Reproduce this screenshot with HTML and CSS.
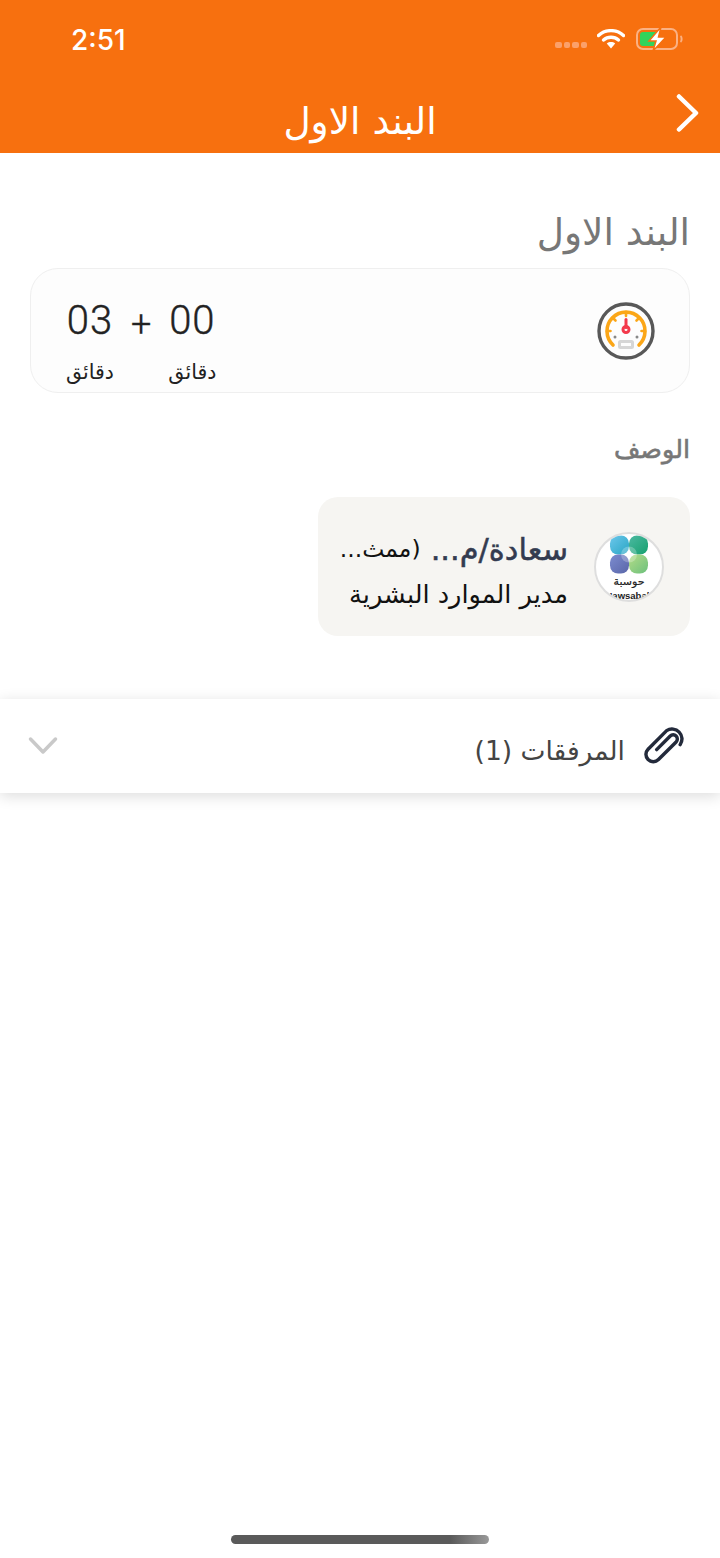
FILE: index.html
```html
<!DOCTYPE html>
<html lang="ar" dir="rtl">
  <head>
    <meta charset="UTF-8" />
    <meta name="viewport" content="width=device-width, initial-scale=1.0" />
    <title>البند الاول</title>
    <link rel="stylesheet" href="styles.css">
  </head>

  <body>
    <div id="whole">
      <header class="topbar">
        <div class="status" dir="ltr">
          <span class="time">2:51</span>
          <div class="status-icons">
            <div class="signal"><i></i><i></i><i></i><i></i></div>
            <svg class="wifi" width="28" height="20" viewBox="0 0 28 20">
              <path d="M1.500 6.500C8.500 0 19.500 0 26.500 6.500" fill="none" stroke="#fff" stroke-width="3.400" stroke-linecap="round" />
              <path d="M6.500 11C10.800 7.300 17.200 7.300 21.500 11" fill="none" stroke="#fff" stroke-width="3.400" stroke-linecap="round" />
              <path d="M9.800 14.500C12.200 12.600 15.800 12.600 18.200 14.500L14 19.500Z" fill="#fff" />
            </svg>
            <svg class="battery" width="48" height="24" viewBox="0 0 48 24">
              <rect x="2" y="2" width="40" height="20" rx="6" fill="none" stroke="#fbb183" stroke-width="2" />
              <path d="M5 8a3 3 0 0 1 3-3h13v14H8a3 3 0 0 1-3-3z" fill="#32d35a" />
              <path d="M45.500 9C47 10 47 14 45.500 15" fill="none" stroke="#fbb183" stroke-width="2" />
              <path d="M26 0L14 14h7L18 24 31 10h-7.500z" fill="#fff" stroke="#f7700f" stroke-width="1.500" />
            </svg>
          </div>
        </div>
        <div class="nav">
          <svg class="back" width="24" height="38" viewBox="0 0 24 38">
            <path d="M3 2.500L20 19 3 35.500" fill="none" stroke="#fff" stroke-width="4.500" stroke-linecap="round" stroke-linejoin="round" />
          </svg>
          <h1>البند الاول</h1>
        </div>
      </header>

      <main class="content">
        <h2 class="item-title">البند الاول</h2>

        <div class="time-card">
          <svg class="gauge" width="60" height="60" viewBox="0 0 60 60">
            <circle cx="30" cy="30" r="27" fill="none" stroke="#585858" stroke-width="3.400" />
            <path d="M17 44A19 19 0 1 1 43 44" fill="none" stroke="#fba617" stroke-width="3.600" stroke-linecap="round" />
            <path d="M30 11v4M17 17l2.500 2.500M43 17l-2.500 2.500M11 30h3.500M49 30h-3.500" stroke="#fba617" stroke-width="2.600" stroke-linecap="round" />
            <path d="M30 18.500v8" stroke="#f33a4c" stroke-width="3" stroke-linecap="round" />
            <circle cx="30" cy="28.500" r="3" fill="none" stroke="#f33a4c" stroke-width="3" />
            <circle cx="19" cy="36" r="1.500" fill="#888" />
            <circle cx="41" cy="36" r="1.500" fill="#888" />
            <rect x="23.500" y="40.500" width="13" height="6" rx="1" fill="none" stroke="#d6d6d6" stroke-width="3" />
          </svg>
          <div class="durations" dir="ltr">
            <div class="duration">
              <span class="num">03</span>
              <span class="unit">دقائق</span>
            </div>
            <span class="plus">+</span>
            <div class="duration">
              <span class="num">00</span>
              <span class="unit">دقائق</span>
            </div>
          </div>
        </div>

        <h3 class="desc-label">الوصف</h3>

        <div class="person-card">
          <div class="avatar">
            <svg width="66" height="66" viewBox="1 1 66 66">
              <defs>
                <linearGradient id="tile-a" x1="0" y1="0" x2="1" y2="1">
                  <stop offset="0" stop-color="#6cc7ec" />
                  <stop offset="1" stop-color="#2aa6c4" />
                </linearGradient>
                <linearGradient id="tile-b" x1="0" y1="0" x2="1" y2="1">
                  <stop offset="0" stop-color="#4cb9a2" />
                  <stop offset="1" stop-color="#16a06e" />
                </linearGradient>
                <linearGradient id="tile-c" x1="0" y1="0" x2="1" y2="1">
                  <stop offset="0" stop-color="#7c8cd0" />
                  <stop offset="1" stop-color="#5a66a8" />
                </linearGradient>
                <linearGradient id="tile-d" x1="0" y1="0" x2="1" y2="1">
                  <stop offset="0" stop-color="#b4dc88" />
                  <stop offset="1" stop-color="#6cc07c" />
                </linearGradient>
              </defs>
              <rect x="15" y="2.500" width="19" height="19" rx="8" fill="url(#tile-a)" />
              <rect x="34" y="2.500" width="19" height="19" rx="8" fill="url(#tile-b)" />
              <rect x="15" y="21.500" width="19" height="19" rx="8" fill="url(#tile-c)" />
              <rect x="34" y="21.500" width="19" height="19" rx="8" fill="url(#tile-d)" />
              <circle cx="34" cy="21.500" r="8" fill="#fff" fill-opacity="0.250" />
              <text class="logo-ar" x="34" y="52" text-anchor="middle">حوسبة</text>
              <text class="logo-en" x="34" y="66" text-anchor="middle">Hawsabah</text>
            </svg>
          </div>
          <div class="person-text">
            <div class="person-name"><b>سعادة/م...</b><span>(ممث...</span></div>
            <div class="person-role">مدير الموارد البشرية</div>
          </div>
        </div>
      </main>

      <section class="attachments">
        <svg class="clip" width="42" height="38" viewBox="0 0 46 42">
          <path d="M16 25L31 10a4.500 4.500 0 0 1 6.500 6.500L18 36a8 8 0 0 1-11.500-11.500L27 4a11 11 0 0 1 15 15.500" fill="none" stroke="#232a3b" stroke-width="3.800" stroke-linecap="round" stroke-linejoin="round" />
        </svg>
        <span class="attach-label">المرفقات (1)</span>
        <svg class="chevron" width="32" height="20" viewBox="0 0 32 20">
          <path d="M2.500 3L15 16 27.500 3" fill="none" stroke="#c9c9c9" stroke-width="3.500" stroke-linecap="round" stroke-linejoin="round" />
        </svg>
      </section>

      <div class="home-bar"></div>
    </div>
  </body>
</html>
```

FILE: styles.css
```css
* {
  box-sizing: border-box;
}

body {
  margin: 0;
  background-color: #fff;
  font-family: "DejaVu Sans", sans-serif;
}

#whole {
  display: flex;
  flex-direction: column;
  height: 1558px;
  overflow: hidden;
}

.topbar {
  background-color: #f7700f;
  height: 153px;
  color: white;
}

.status {
  display: flex;
  justify-content: space-between;
  align-items: center;
  height: 78px;
  padding: 0 37px 0 71px;
}

.time {
  margin-top: 2px;
  font-family: "Inter", sans-serif;
  font-size: 28px;
  font-weight: 500;
}

.status-icons {
  display: flex;
  align-items: center;
  gap: 10px;
}

.signal {
  display: flex;
  gap: 2px;
  margin-top: 12px;
}

.signal i {
  width: 6.500px;
  height: 6px;
  border-radius: 2px;
  background-color: #fba06a;
}

.nav {
  position: relative;
  display: flex;
  justify-content: center;
  align-items: center;
  height: 75px;
  padding-top: 11px;
}

.nav h1 {
  margin: 0;
  font-size: 37.500px;
  font-weight: normal;
}

.back {
  position: absolute;
  right: 20px;
  top: 16px;
}

.content {
  padding: 58px 30px 0;
}

.item-title {
  margin: 0 0 15px;
  font-size: 37.500px;
  line-height: 42px;
  font-weight: normal;
  color: #777;
}

.time-card {
  display: flex;
  justify-content: space-between;
  align-items: center;
  height: 125px;
  padding: 0 33px 0 34px;
  background-color: #fdfdfd;
  border: 1px solid #efefef;
  border-radius: 28px;
}

.durations {
  display: flex;
  gap: 16px;
  padding-top: 21px;
}

.duration {
  display: flex;
  flex-direction: column;
  align-items: center;
  gap: 17px;
  width: 50px;
}

.num {
  font-family: "Roboto", sans-serif;
  font-size: 40px;
  font-weight: 300;
  line-height: 44px;
  letter-spacing: 1px;
  color: #222;
  -webkit-text-stroke: 0.400px #222;
}

.unit {
  font-size: 20.500px;
  line-height: 24px;
  color: #222;
}

.plus {
  margin-top: 3px;
  font-family: "Roboto", sans-serif;
  font-size: 36px;
  font-weight: 300;
  line-height: 44px;
  color: #222;
  -webkit-text-stroke: 0.400px #222;
}

.desc-label {
  margin: 41px 0 33px;
  font-size: 25.500px;
  line-height: 30px;
  font-weight: normal;
  color: #777;
  -webkit-text-stroke: 0.600px #777;
}

.person-card {
  display: flex;
  align-items: center;
  gap: 26px;
  width: 372px;
  height: 139px;
  padding: 0 26px;
  background-color: #f6f5f2;
  border-radius: 20px;
}

.avatar {
  flex: none;
  width: 70px;
  height: 70px;
  background-color: #fff;
  border: 2px solid #dedede;
  border-radius: 50%;
  overflow: hidden;
}

.logo-ar {
  font-size: 11px;
  fill: #222;
  stroke: #222;
  stroke-width: 0.200px;
}

.logo-en {
  font-family: "Liberation Sans", sans-serif;
  font-size: 9.500px;
  font-weight: bold;
  fill: #222;
}

.person-text {
  padding-top: 10px;
}

.person-name {
  display: flex;
  align-items: center;
  gap: 10px;
  white-space: nowrap;
  line-height: 45px;
}

.person-name b {
  font-size: 30.500px;
  font-weight: normal;
  color: #333b50;
  -webkit-text-stroke: 0.500px #333b50;
}

.person-name span {
  font-size: 23.500px;
  color: #111;
}

.person-role {
  font-size: 25.600px;
  line-height: 45px;
  color: #111;
}

.attachments {
  display: flex;
  align-items: center;
  height: 94px;
  margin-top: 63px;
  padding: 0 36px 0 28px;
  background-color: white;
  box-shadow: 0 3px 14px rgba(0, 0, 0, 0.14);
}

.attach-label {
  margin-right: 17px;
  margin-top: 8px;
  font-size: 26.500px;
  color: #444;
}

.chevron {
  margin-right: auto;
}

.home-bar {
  width: 258px;
  height: 9px;
  margin: auto auto 14px;
  background: linear-gradient(to right, #5a5a5a 85%, #999);
  border-radius: 5px;
}
```
